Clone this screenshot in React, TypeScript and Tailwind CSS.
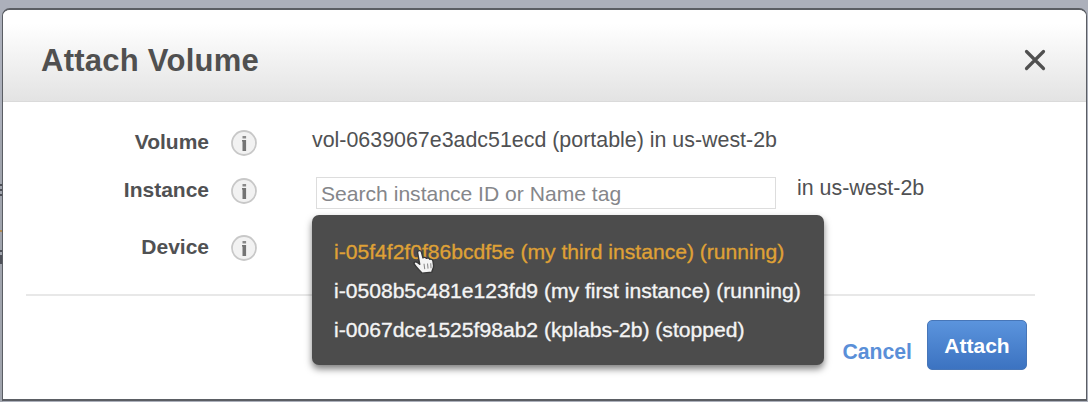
import type { ReactNode } from "react";

const instances = [
  { label: "i-05f4f2f0f86bcdf5e (my third instance) (running)", active: true },
  { label: "i-0508b5c481e123fd9 (my first instance) (running)", active: false },
  { label: "i-0067dce1525f98ab2 (kplabs-2b) (stopped)", active: false },
];

function InfoIcon() {
  return (
    <svg width="28" height="28" viewBox="0 0 28 28" className="shrink-0" aria-hidden="true">
      <circle cx="14" cy="14" r="12" fill="#f2f2f2" stroke="#c8c8c8" strokeWidth="1.8" />
      <rect x="12.5" y="7" width="3.6" height="2.5" fill="#8a8a8a" />
      <path d="M12 11h4.1v11h-3.6v-9.4H12z" fill="#747474" />
    </svg>
  );
}

function HandCursor() {
  return (
    <svg width="31" height="30" viewBox="0 0 26 28" preserveAspectRatio="none" className="absolute left-[97px] top-[32px]" aria-hidden="true">
      <path
        d="M7.2 5.2c0-2.4 3-2.4 3.3-.2l1.2 5.2c.9-1 2.5-.7 2.9.5 1-.8 2.5-.3 2.8.8 1.4-.5 2.6.4 2.7 1.8l.5 4c.2 2.6-1.3 3.8-1.4 6.1l-8.3 1c-1.3-2.4-4.3-4.3-6.5-8.4-.8-1.8 1.3-2.8 2.6-1.5l2 1.7z"
        fill="#f4f4f4"
        stroke="#383838"
        strokeWidth="1.2"
        strokeLinejoin="round"
      />
      <path d="M12.6 15.6l.6 5M15.5 15.4l.5 4.8M18.2 15.2l.3 4.6" stroke="#8a8a8a" strokeWidth="0.9" fill="none" />
    </svg>
  );
}

function FieldLabel({ children }: { children: ReactNode }) {
  return (
    <div className="flex w-[255px] shrink-0 items-start justify-end gap-[21px]">
      <span className="pt-px text-[21px] leading-6 font-bold">{children}</span>
      <InfoIcon />
    </div>
  );
}

function PageEdge() {
  return (
    <svg width="3" height="402" className="absolute left-0 top-0" aria-hidden="true">
      <rect y="130" width="3" height="272" fill="#a0a4ad" />
      <path d="M0 184h2v2H0zM0 189h2v2H0zM0 194h2v2H0zM0 250h2v2H0zM0 255h2v9H0z" fill="#4d5058" />
      <rect y="230" width="2" height="2" fill="#b18a52" />
    </svg>
  );
}

export default function App() {
  return (
    <main className="relative h-[402px] w-[1088px] overflow-hidden bg-[#acb0bb] pt-2 pl-[2px] font-['Liberation_Sans',Arial,sans-serif] text-[21px] leading-6 text-[#505153]">
      <PageEdge />
      <section className="relative flex h-[393px] w-[1085px] flex-col overflow-hidden rounded-t-lg border-x-[1.5px] border-t-2 border-b-2 border-[#5b5e64] bg-white">
        <header className="flex h-[92px] shrink-0 items-center justify-between border-b border-[#dadada] bg-linear-to-b from-white from-15% to-[#e3e3e3] pr-[40px] pl-[38px]">
          <h1 className="pt-[10px] text-[31px] leading-9 font-bold tracking-[0.25px] text-[#505050]">Attach Volume</h1>
          <button className="mt-2 flex" aria-label="Close">
            <svg width="22" height="22" viewBox="0 0 22 22" aria-hidden="true">
              <path d="M2.5 2.5l17 17M19.5 2.5l-17 17" stroke="#505050" strokeWidth="3.2" strokeLinecap="round" />
            </svg>
          </button>
        </header>

        <div className="flex flex-col">
          <div className="flex h-12 items-start pt-[27px]">
            <FieldLabel>Volume</FieldLabel>
            <span className="-mt-px ml-[54px] whitespace-nowrap text-[21.4px]">
              vol-0639067e3adc51ecd (portable) in us-west-2b
            </span>
          </div>
          <div className="flex h-[57px] items-start pt-[27px]">
            <FieldLabel>Instance</FieldLabel>
            <input
              className="ml-[58px] h-8 w-[460px] shrink-0 border border-[#dddddd] bg-white px-1 pt-[2px] text-[21.1px] leading-6 outline-none placeholder:text-[#85868a] placeholder:opacity-100"
              placeholder="Search instance ID or Name tag"
            />
            <span className="-mt-px ml-[21px] whitespace-nowrap text-[21.4px]">in us-west-2b</span>
          </div>
          <div className="flex h-[87px] items-start pt-[27px]">
            <FieldLabel>Device</FieldLabel>
          </div>
        </div>

        <footer className="mr-[51px] ml-[23px] flex h-[106px] items-start justify-end border-t-2 border-[#e8e8e8] pt-6 pr-2">
          <button className="mt-[20px] mr-[15px] text-[21.2px] leading-6 font-bold text-[#5a8fd8]">Cancel</button>
          <button className="h-[50px] w-[100px] rounded-[5px] border border-[#4776b8] bg-linear-to-b from-[#5b94dd] to-[#3c73c1] pt-[2px] text-[21px] leading-6 font-bold text-white">
            Attach
          </button>
        </footer>
      </section>

      <div className="absolute top-[215px] left-[312px] h-[150px] w-[512px] rounded-[7px] bg-[#4c4c4c] pt-[17px] pl-[22px] shadow-[0_4px_7px_rgba(0,0,0,0.5)]">
        <ul className="flex flex-col text-[21.1px] leading-[39px] whitespace-nowrap [-webkit-text-stroke:0.35px_currentColor]">
          {instances.map((instance) => (
            <li key={instance.label} className={instance.active ? "text-[#dfa136]" : "text-[#f4f4f4]"}>
              {instance.label}
            </li>
          ))}
        </ul>
        <HandCursor />
      </div>
    </main>
  );
}
